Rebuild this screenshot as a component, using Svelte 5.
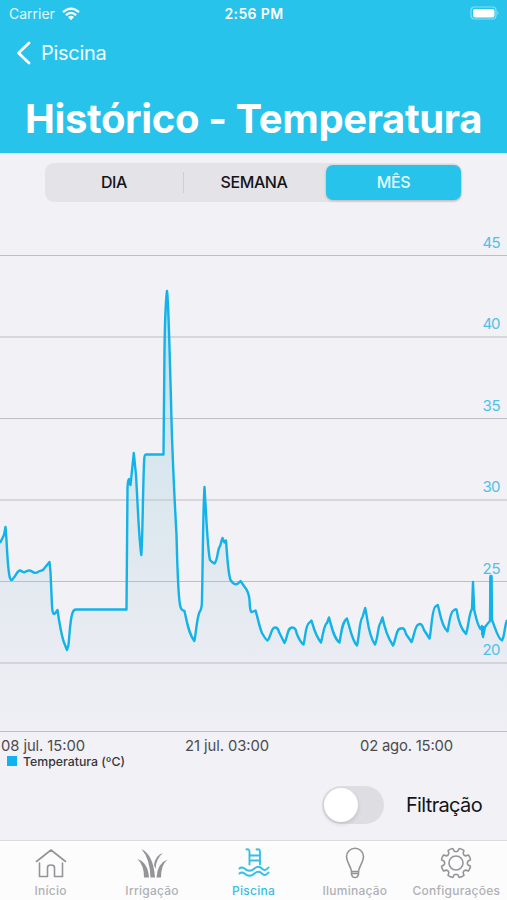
<script>
  const grid = [
    { y: 255.5, label: '45' },
    { y: 337, label: '40' },
    { y: 418.5, label: '35' },
    { y: 500, label: '30' },
    { y: 581.5, label: '25' },
    { y: 663, label: '20' }
  ];

  const series =
    'M0 543 L2 539 L4 535 L5.5 527 L6.5 540 C7.5 560 8 572 10 578 Q11.5 582 13.500 578 C16 576 17 570.5 20 570.5 C22 570.5 23 573 25 572 C28 570 30 570 32 571.5 Q35 574 38 572 C40 570 43 572 45 567.500 L49.500 562 L50.5 572 L52 606 Q52.5 616 55 613.500 L57.500 610 L59 620 C61 632 63 641 65 645 L67 650 L68.500 645 C70 630 70 620 72.500 613 Q73.500 609.500 76 609.500 L126.500 609.500 L127.5 488 Q127.800 479 129 479 L130.500 485 L133.800 453 L136 475 C138 510 139 540 141.300 555 C142.500 545 143 480 144.200 460 Q144.300 454.500 146 454.500 L163.500 454.500 L164.500 350 C165 315 165.800 300 167 291 C168.500 300 169.500 350 171 400 C172 450 174 490 176.500 535 C177.300 565 178 600 180.500 607 Q181.500 610.500 184.500 611 C187 623 189 634 194.300 641 C196 635 196.500 619 199.500 612 Q202 609 202 600 C203 550 203 510 204.500 487 C206 510 207.500 550 210 560 Q212.500 563 214.500 563.500 C217.500 560 217 554 219 548 C221.500 545 220.500 542 222.500 538 L224.500 542.500 L226 540.500 C227.500 560 228 573 230.500 580 Q235 587 239 582.500 L240.500 581 L244 586 Q249 592 249.500 600 Q250 613 252 612 L255.500 610.500 C258 618 259 626 262 633 Q266 640 267.500 640.500 C271 637 271 627.500 275 627.500 Q278 627.500 279 632 L284.500 643 C288 637 287 627.500 292 627.500 Q296 627.500 296.500 633 Q300 642 303.500 644.500 C305.500 637 305.500 625 309 623 L311.500 620.500 C313.500 627 315 635 321 642.500 C323 635 324 624 327 623 L329 617.500 C332 628 334 639 339.500 642.500 C341.500 632 342 622 347 618.500 C350 628 352 641 357 645.500 C359.500 635 359.500 620 362.500 617 L365.200 608 C368 620 368 635 375 644.500 C378 638 378 625 380.500 623 L382.500 617.500 C385 630 388 638 393 645.500 C396 640 396 628 401 628.500 Q404.500 627 406 634 L411.500 642 C414 637 415 625 418.500 624.500 Q421.500 622 424 630 L429.500 638.500 C431.500 630 432 608 435.500 606.500 L437.800 605 C440 612 441 625 447.500 631.500 C449.500 623 450 612 453.500 610.500 Q455.500 608.500 456.500 609.500 C458 619 461 629 466 634 C468.500 627 469 613 472 609 L473 582 L474.200 610 C476 617 477 624 480.500 629 L482 626 L483 637 L485 627 Q488 623 490 621 L490.500 576 L491.500 576 L492 620 C495 627 498 639 502 640.500 C505 635 504 628 507 620';

  // Eight-toothed cog, alternating between the rim and the notch radius.
  const cog = Array.from({ length: 8 }, (_, i) => {
    const base = 22.5 + i * 45;
    const at = (a, r) => {
      const t = ((base + a) * Math.PI) / 180;
      return `${(16 + r * Math.cos(t)).toFixed(2)} ${(16 + r * Math.sin(t)).toFixed(2)}`;
    };
    return `${i ? 'L' : 'M'}${at(-14, 12)} L${at(-10, 14.8)} Q${at(0, 15.3)} ${at(10, 14.8)} L${at(14, 12)} Q${at(22.5, 10.6)} ${at(31, 12)}`;
  }).join(' ') + 'Z';

  const tabs = ['Início', 'Irrigação', 'Piscina', 'Iluminação', 'Configurações'];
  const ranges = ['DIA', 'SEMANA', 'MÊS'];
  let selected = $state(2);
</script>

<div class="screen">
  <header>
    <div class="status">
      <div class="carrier">
        <span>Carrier</span>
        <svg width="18" height="14" viewBox="0 0 18 14">
          <g fill="none" stroke="#fff" stroke-width="2.3">
            <path d="M1 5.200 Q9 -2 17 5.200" />
            <path d="M3.900 8.200 Q9 3.600 14.100 8.200" />
          </g>
          <path fill="#fff" d="M6 10 Q9 7.500 12 10 L9 13.300Z" />
        </svg>
      </div>
      <b>2:56 PM</b>
      <svg class="battery" width="31" height="15" viewBox="0 0 31 15">
        <rect x="1" y="1" width="25" height="12" rx="3.500" fill="none" stroke="#8adff5" stroke-width="1.200" />
        <rect x="3" y="3" width="21.500" height="8.500" rx="2" fill="#fff" />
        <path d="M27.500 5 Q29.600 7 27.500 9Z" fill="#8adff5" />
      </svg>
    </div>
    <div class="back">
      <svg width="16" height="24" viewBox="0 0 16 24"><path d="M13 2 L2.500 12 L13 22" fill="none" stroke="#fff" stroke-width="2.800" stroke-linecap="round" stroke-linejoin="round" /></svg>
      <span>Piscina</span>
    </div>
    <h1>Histórico - Temperatura</h1>
  </header>

  <div class="segments">
    {#each ranges as name, i}
      <button class:active={selected === i} class:divided={i === 0} onclick={() => (selected = i)}>{name}</button>
    {/each}
  </div>

  <svg class="chart" width="507" height="568" viewBox="0 202 507 568">
    <defs>
      <linearGradient id="area" gradientUnits="userSpaceOnUse" x1="0" y1="291" x2="0" y2="731">
        <stop offset="0" stop-color="#a8e0f2" stop-opacity=".85" />
        <stop offset=".35" stop-color="#c6dfe8" stop-opacity=".6" />
        <stop offset=".7" stop-color="#dfe7ee" stop-opacity=".7" />
        <stop offset="1" stop-color="#eeeef4" stop-opacity=".7" />
      </linearGradient>
    </defs>
    <path d="{series} L507 731 L0 731Z" fill="url(#area)" />
    {#each grid as line}
      <path d="M0 {line.y}H507" stroke="#bdbdc2" stroke-width="1.100" />
    {/each}
    <path d="M0 731.500H507" stroke="#bdbdc2" stroke-width="1.100" />
    <path d={series} fill="none" stroke="#12b3e8" stroke-width="2.400" stroke-linejoin="round" />
    <path d="M129.500 479V485M482.500 626V635M490.800 577V620" stroke="#12b3e8" stroke-width="3" />
    {#each grid as line}
      <text class="value" x="482.500" y={line.y - 8} textLength="18">{line.label}</text>
    {/each}
    <text class="date" x="1" y="751" textLength="84">08 jul. 15:00</text>
    <text class="date" x="185" y="751" textLength="84">21 jul. 03:00</text>
    <text class="date" x="360" y="751" textLength="93">02 ago. 15:00</text>
    <rect x="7" y="756" width="10" height="10" fill="#0fb4ee" />
    <text class="legend" x="23" y="766" textLength="102">Temperatura (ºC)</text>
  </svg>

  <div class="filter">
    <div class="toggle"><i></i></div>
    <span>Filtração</span>
  </div>

  <nav>
    {#each tabs as tab, i}
      <div class="tab" class:current={i === 2}>
        <svg width="32" height="32" viewBox="0 0 32 32" fill="none" stroke="currentColor" stroke-width="1.600" stroke-linecap="round" stroke-linejoin="round">
          {#if i === 0}
            <path d="M1.500 14.500 L16 3 L30.500 14.500 M4.500 16V29.500H12.500V20.500Q12.500 18 16 18Q19.500 18 19.500 20.500V29.500H27.500V16" />
          {:else if i === 1}
            <g fill="currentColor" stroke="none">
              <path d="M5.500 2Q17.500 8 19 30.500H14.500Q14 12 5.500 2Z" />
              <path d="M1.500 12Q12 15.500 13 30.500H8Q8 18 1.500 12Z" />
              <path d="M27 6Q19.500 8 18 18L19.500 22Q20 11.500 27 6Z" />
              <path d="M31.500 12.500Q21.500 16 20.500 30.500H25Q25 18 31.500 12.500Z" />
            </g>
          {:else if i === 2}
            <g stroke-width="1.900">
              <path d="M8.500 2.500Q11.500 1.500 11.500 5V17.500M18.500 2.500Q22 1.500 22 5V17.500M11.500 8.500H22M11.500 13.500H22" />
              <path d="M1.500 21.500Q3.500 19.500 6.500 21.500Q11.500 26 16.500 21.500Q20.500 18 24.500 22Q27.500 24.500 30.500 20.500M1.500 26.500Q3.500 24.500 6.500 26.500Q11.500 31 16.500 26.500Q20.500 23 24.500 27Q27.500 29.500 30.500 25.500" />
            </g>
          {:else if i === 3}
            <path d="M12.500 24.500C12 19 7.500 15.500 7.500 9.800A8.500 8.500 0 0 1 24.500 9.800C24.500 15.500 20 19 19.500 24.500ZM12.500 24.500V27Q13 30.500 16 30.500Q19 30.500 19.500 27V24.500M13 26.500H19" />
          {:else}
            <path d={cog} /><circle cx="16" cy="16" r="7" />
          {/if}
        </svg>
        <span>{tab}</span>
      </div>
    {/each}
  </nav>
</div>

<style>
  :global(body) { margin: 0; }
  .screen {
    width: 507px; height: 900px; overflow: hidden;
    display: flex; flex-direction: column;
    background: #f1f1f6; color: #151517;
    font-family: Inter, 'Liberation Sans', sans-serif;
  }
  header { height: 153px; flex: none; background: #27c3eb; color: #fff; }
  .status {
    height: 27px; padding: 0 6px 0 9px; box-sizing: border-box;
    display: grid; grid-template-columns: 1fr auto 1fr; align-items: center;
    font-size: 14px;
  }
  .carrier { display: flex; align-items: center; gap: 7px; color: #e4f8fd; }
  .status b { font-weight: 600; letter-spacing: .4px; margin-right: 2px; }
  .battery { justify-self: end; }
  .back { display: flex; align-items: center; gap: 9px; padding: 13px 0 0 16px; height: 25px; font-size: 20px; letter-spacing: -.3px; color: #f0fbfe; }
  h1 { margin: 33px 0 0 25px; font-size: 40px; line-height: 42px; font-weight: 700; letter-spacing: -.37px; white-space: nowrap; }
  .segments {
    height: 39px; width: 417px; margin: 10px 0 0 45px; flex: none; padding: 2px 0 2px 0; box-sizing: border-box;
    display: flex; border-radius: 9px; background: #e4e3e8;
  }
  .segments button {
    flex: 1; border: 0; padding: 0 0 1px; border-radius: 7px; background: none;
    font: 500 16px Inter, 'Liberation Sans', sans-serif; letter-spacing: -.4px; color: #151517;
  }
  .segments .divided { flex: 0 0 139px; border-right: 1px solid transparent; border-image: linear-gradient(transparent 22%, #cfced4 22%, #cfced4 78%, transparent 78%) 1; }
  .segments .active { flex: 0 0 135px; background: #27c3eb; color: #e9faff; box-shadow: 0 1px 3px #0003; margin: 0 1px 0 2px; }
  .chart { display: block; flex: none; }
  .value { font-size: 15px; fill: #4fc0e6; }
  .date { font-size: 14.8px; fill: #4b4b4f; }
  .legend { font-size: 12.3px; font-weight: 500; fill: #37373a; }
  .filter { flex: 1; display: flex; align-items: center; justify-content: flex-end; padding-right: 25px; gap: 22px; font-size: 20px; letter-spacing: -.65px; }
  .toggle { width: 62px; height: 38px; border-radius: 19px; background: #dedde1; padding: 2px; box-sizing: border-box; }
  .toggle i { display: block; width: 34px; height: 34px; border-radius: 50%; background: #fff; box-shadow: 0 2px 4px #0002; }
  nav { height: 60px; flex: none; box-sizing: border-box; border-top: 1px solid #d9d9de; background: #fcfcfd; display: flex; }
  .tab { flex: 1; min-width: 0; display: flex; flex-direction: column; align-items: center; padding-top: 6px; color: #949498; font-size: 12px; font-weight: 500; letter-spacing: .25px; }
  .tab span { line-height: 15px; margin-top: 4px; color: #b0b0b4; white-space: nowrap; }
  .current, .tab.current span { color: #36bfe3; }
</style>
